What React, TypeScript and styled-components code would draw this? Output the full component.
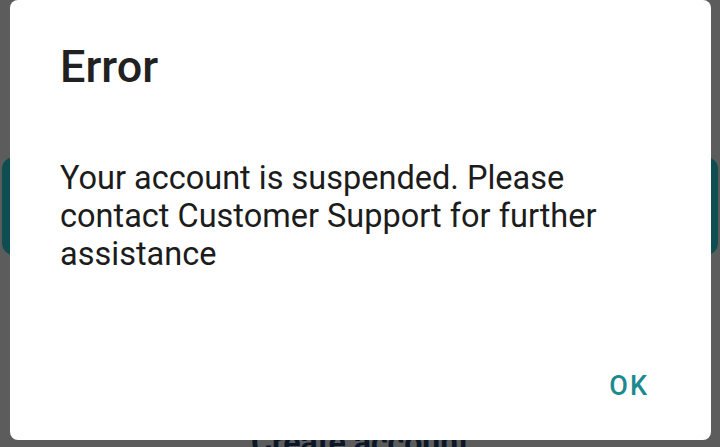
import React from "react";
import styled, { createGlobalStyle } from "styled-components";

const Global = createGlobalStyle`
  html, body { margin: 0; padding: 0; }
  body {
    width: 720px;
    height: 447px;
    overflow: hidden;
    background: #5c5c5c;
    font-family: Roboto, "Noto Sans", Arial, sans-serif;
  }
`;

const Screen = styled.div`
  position: relative;
  width: 720px;
  height: 447px;
  overflow: hidden;
  background: #5c5c5c;
`;

const Page = styled.div`
  display: flex;
  flex-direction: column;
  align-items: stretch;
  padding: 157px 2px 0 2px;
`;

const PrimaryButton = styled.div`
  height: 98px;
  border-radius: 12px;
  background: #0e4d52;
`;

const LinkText = styled.div`
  margin-top: 171px;
  text-align: center;
  font-size: 32px;
  line-height: 32px;
  font-weight: 700;
  color: #0b1626;
`;

const Scrim = styled.div`
  position: absolute;
  inset: 0;
`;

const Dialog = styled.div`
  position: absolute;
  left: 10px;
  top: 0;
  width: 701px;
  height: 440px;
  box-sizing: border-box;
  background: #ffffff;
  border-radius: 8px;
  padding: 44px 0 0 50px;
  display: flex;
  flex-direction: column;
`;

const Title = styled.h1`
  margin: 0;
  font-size: 45px;
  line-height: 45px;
  font-weight: 500;
  color: #212121;
`;

const Message = styled.p`
  margin: 70px 0 0 0;
  width: 600px;
  font-size: 32.5px;
  line-height: 38px;
  font-weight: 400;
  color: #1c1c1c;
`;

const Actions = styled.div`
  margin-top: auto;
  display: flex;
  justify-content: flex-end;
  padding: 0 62px 40px 0;
`;

const TextButton = styled.button`
  border: none;
  background: none;
  padding: 0;
  font-family: inherit;
  font-size: 27px;
  line-height: 27px;
  font-weight: 500;
  letter-spacing: 2px;
  color: #1b8a90;
  cursor: pointer;
`;

export default function App() {
  return (
    <>
      <Global />
      <Screen>
        <Page>
          <PrimaryButton />
          <LinkText>Create account</LinkText>
        </Page>
        <Scrim>
          <Dialog>
            <Title>Error</Title>
            <Message>
              Your account is suspended. Please contact Customer Support for further assistance
            </Message>
            <Actions>
              <TextButton>OK</TextButton>
            </Actions>
          </Dialog>
        </Scrim>
      </Screen>
    </>
  );
}
